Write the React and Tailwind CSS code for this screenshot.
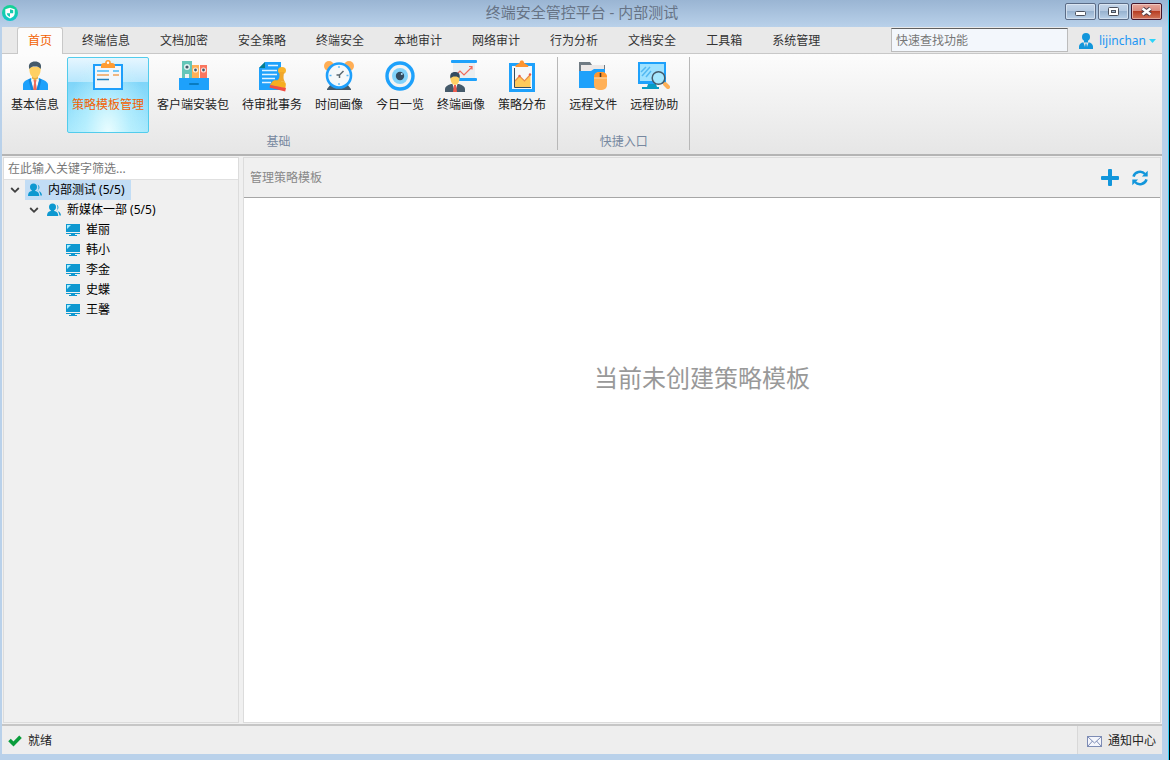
import React from "react";

const TABS = ["终端信息", "文档加密", "安全策略", "终端安全", "本地审计", "网络审计", "行为分析", "文档安全", "工具箱", "系统管理"];

const BASIC_ITEMS = [
  { label: "基本信息", Icon: PersonIcon },
  { label: "策略模板管理", Icon: TemplateIcon, active: true },
  { label: "客户端安装包", Icon: PackageIcon },
  { label: "待审批事务", Icon: ApprovalIcon },
  { label: "时间画像", Icon: ClockIcon },
  { label: "今日一览", Icon: EyeIcon },
  { label: "终端画像", Icon: PortraitIcon },
  { label: "策略分布", Icon: ChartIcon },
];

const QUICK_ITEMS = [
  { label: "远程文件", Icon: RemoteFileIcon },
  { label: "远程协助", Icon: RemoteAssistIcon },
];

const TERMINALS = ["崔丽", "韩小", "李金", "史蝶", "王馨"];

export default function App() {
  return (
    <div className="flex min-h-screen flex-col border-r border-black bg-[#b9d1ea] font-['Noto_Sans','Noto_Sans_CJK_SC',sans-serif] text-xs text-[#222]">
      <div className="flex flex-1 flex-col border-r border-[#35d0f5] pb-[6px]">
        <TitleBar />
        <div className="mr-[6px] ml-[2px] flex flex-1 flex-col bg-[#f0f0f0]">
          <TabBar />
          <Ribbon />
          <main className="flex flex-1 gap-1 p-px">
            <Sidebar />
            <Content />
          </main>
          <StatusBar />
        </div>
      </div>
    </div>
  );
}

function TitleBar() {
  return (
    <header className="flex h-[27px] items-start bg-linear-to-b from-[#9ab5d3] to-[#b9d1ea]">
      <div className="flex flex-1 pt-[5px] pl-[2px]">
        <LogoIcon />
      </div>
      <h1 className="h-6 text-[15px] leading-6 text-[#667385]">终端安全管控平台 - 内部测试</h1>
      <div className="flex flex-1 justify-end gap-[2px] pt-[3px] pr-[6px]">
        <WindowButton label="最小化">
          <rect x="10.5" y="8.5" width="10" height="4" rx="1" fill="#fff" stroke="#4a505c" />
        </WindowButton>
        <WindowButton label="最大化">
          <rect x="10.5" y="4.5" width="10" height="8" rx="1" fill="#fff" stroke="#4a505c" />
          <rect x="13.5" y="7.5" width="4" height="2" fill="#9fb6cf" stroke="#4a505c" />
        </WindowButton>
        <WindowButton label="关闭" close>
          <path d="M11.500 5.500l8 6M19.500 5.500l-8 6" stroke="#4a3a44" strokeWidth="4.500" />
          <path d="M11.500 5.500l8 6M19.500 5.500l-8 6" stroke="#fff" strokeWidth="2.500" />
        </WindowButton>
      </div>
    </header>
  );
}

function WindowButton({ label, close, children }) {
  const tone = close
    ? "border-[#43152a] from-[#e6a69b] via-[#d7867a] via-50% to-[#c96552]"
    : "border-[#5b6c86] from-[#c3d5e9] via-[#b3c8e0] via-50% to-[#b4cce6]";
  return (
    <button
      aria-label={label}
      className={`relative h-[17px] w-[31px] rounded-[2px] border bg-linear-to-b ${tone} shadow-[inset_0_0_0_1px_rgba(255,255,255,0.4)]`}
    >
      <span className={`absolute inset-x-px top-[7px] bottom-px ${close ? "bg-linear-to-b from-[#b5391f] to-[#cf6e53]" : "bg-linear-to-b from-[#96b1ce] to-[#b5cde6]"}`} />
      <svg className="absolute -top-px -left-px" width="31" height="17" viewBox="0 0 31 17">
        {children}
      </svg>
    </button>
  );
}

function TabBar() {
  return (
    <div className="flex h-[27px] justify-between border-b border-[#c8c8c8] bg-[#e9e9e9]">
      <nav className="flex h-[27px] pl-[15px]">
        <button className="mr-1 h-full w-[46px] rounded-t-[3px] border border-b-0 border-[#c8c8c8] bg-[#fcfcfc] text-[#f26100]">首页</button>
        {TABS.map((tab) => (
          <button key={tab} className="h-full px-[15px] text-[#333]">
            {tab}
          </button>
        ))}
      </nav>
      <div className="flex items-start pr-[6px]">
        <input
          aria-label="快速查找功能"
          placeholder="快速查找功能"
          className="mt-px h-6 w-[177px] border border-[#bcbcbc] border-t-[#606060] bg-[#f3f7fc] px-1 placeholder:text-[#777]"
        />
        <button className="flex h-[27px] items-center pl-[11px] text-[#2196f3]">
          <UserIcon />
          <span className="ml-[6px]">lijinchan</span>
          <svg className="ml-[3px]" width="7" height="4" viewBox="0 0 7 4">
            <path d="M0 0h7L3.5 4z" fill="#2bd4fa" />
          </svg>
        </button>
      </div>
    </div>
  );
}

function Ribbon() {
  return (
    <section className="flex h-[102px] border-b-2 border-[#b4b4b4] bg-linear-to-b from-[#fcfcfc] to-[#e6e6e6] pt-[3px] pb-1">
      <RibbonGroup title="基础" items={BASIC_ITEMS} className="pl-1" />
      <RibbonGroup title="快捷入口" items={QUICK_ITEMS} className="pl-[6px]" />
    </section>
  );
}

function RibbonGroup({ title, items, className }) {
  return (
    <div className={`flex flex-col justify-between border-r border-[#b8b8b8] pr-[6px] ${className}`}>
      <div className="flex gap-[3px]">
        {items.map(({ label, Icon, active }) => (
          <button
            key={label}
            className={`flex h-[76px] flex-col items-center rounded-[2px] border px-1 pt-[2px] leading-4 whitespace-nowrap ${
              active
                ? "border-[#52ccec] bg-[radial-gradient(ellipse_at_bottom,#f0ffffe6_0%,#c8f6ff88_40%,transparent_75%),linear-gradient(to_bottom,#e6f6ff_0%,#b8e7fd_32%,#7fd5f9_33%,#a6e8fd_100%)] text-[#f26100]"
                : "border-transparent"
            }`}
          >
            <svg width="32" height="32" viewBox="0 0 32 32" fill="none">
              <Icon />
            </svg>
            <span className="mt-[5px]">{label}</span>
          </button>
        ))}
      </div>
      <div className="text-center leading-[18px] text-[#7788a0]">{title}</div>
    </div>
  );
}

function Sidebar() {
  return (
    <aside className="w-[236px] shrink-0 border border-[#dcdcdc]">
      <input
        aria-label="关键字筛选"
        placeholder="在此输入关键字筛选..."
        className="block h-[22px] w-full border-b border-[#e0e0e0] bg-white px-1 placeholder:text-[#777]"
      />
      <ul className="text-black">
        <li>
          <div className="flex h-5 items-center pl-[5px]">
            <Chevron />
            <span className="ml-1 flex h-5 items-center bg-[#c2ddf5] pr-[6px] pl-[3px]">
              <GroupIcon />
              <span className="ml-[6px]">内部测试 (5/5)</span>
            </span>
          </div>
          <ul>
            <li>
              <div className="flex h-5 items-center pl-6">
                <Chevron />
                <span className="ml-1 flex items-center pl-[3px]">
                  <GroupIcon />
                  <span className="ml-[6px]">新媒体一部 (5/5)</span>
                </span>
              </div>
              <ul>
                {TERMINALS.map((name) => (
                  <li key={name} className="flex h-5 items-center pl-[62px]">
                    <MonitorIcon />
                    <span className="ml-[6px]">{name}</span>
                  </li>
                ))}
              </ul>
            </li>
          </ul>
        </li>
      </ul>
    </aside>
  );
}

function Content() {
  return (
    <section className="flex flex-1 flex-col border border-[#dcdcdc]">
      <div className="flex h-10 items-center justify-between border-b border-[#a6a6a6] pr-3 pl-[6px]">
        <h2 className="text-[#888]">管理策略模板</h2>
        <div className="flex items-center gap-[13px]">
          <button aria-label="新建">
            <svg width="18" height="18" viewBox="0 0 18 18">
              <rect x="7" y="0" width="4" height="17" rx="1" fill="#1296db" />
              <rect x="0" y="7" width="18" height="4" rx="1" fill="#1296db" />
            </svg>
          </button>
          <button aria-label="刷新">
            <svg width="16" height="16" viewBox="0 0 16 16" fill="none" stroke="#1296db" strokeWidth="2.5">
              <path d="M1.500 6.600A6.600 6 0 0 1 13 4M14.500 9.400A6.600 6 0 0 1 3 12" />
              <path d="M15.700 0.800v5.800h-5.800zM.3 15.200V9.400h5.800z" fill="#1296db" stroke="none" />
            </svg>
          </button>
        </div>
      </div>
      <div className="flex flex-1 justify-center bg-white pt-[162px]">
        <p className="text-2xl leading-9 text-[#999]">当前未创建策略模板</p>
      </div>
    </section>
  );
}

function StatusBar() {
  return (
    <footer className="flex h-[30px] items-stretch justify-between border-t-2 border-[#c6c6c6] bg-[#eeeeee]">
      <div className="flex items-center pt-[2px] pl-[6px]">
        <svg width="14" height="12" viewBox="0 0 14 12">
          <path d="M1.500 5l4 4L12.500 1.800" fill="none" stroke="#0a9d3c" strokeWidth="3.600" />
        </svg>
        <span className="ml-[6px]">就绪</span>
      </div>
      <button className="flex items-center border-l border-[#d8d8d8] bg-[#e9e9e9] pt-[2px] pr-[6px] pl-[9px]">
        <svg width="15" height="11" viewBox="0 0 15 11" fill="#f4f6fc" stroke="#7d8cb5">
          <rect x=".5" y=".5" width="14" height="10" />
          <path d="M1 1l6.500 6L14 1M1 10l4.500-5M14 10L9.500 5" fill="none" />
        </svg>
        <span className="ml-[6px]">通知中心</span>
      </button>
    </footer>
  );
}

function Chevron() {
  return (
    <svg width="12" height="8" viewBox="0 0 12 8">
      <path d="M2.200 2l3.800 3.800L9.800 2" fill="none" stroke="#404040" strokeWidth="1.800" />
    </svg>
  );
}

function GroupIcon() {
  return (
    <svg width="14" height="14" viewBox="0 0 14 14" fill="#0d98d0">
      <path d="M9.500 1.600a3 3 0 0 1 .8 5.200c-.5.4-.3 1 .3 1.200l-1-.2c.6-1 .9-1.800.9-3.500 0-1-.4-2-1-2.700z" />
      <path d="M10.800 8.200c2 .7 3 1.800 3.200 4.300h-1.600c-.2-2-.6-3-1.600-4.300z" />
      <circle cx="5.500" cy="4" r="3.500" />
      <path d="M0 13c0-3 1.200-4.300 3.700-4.900l.3-1.600h3l.3 1.600C9.800 8.700 11.300 10 11.300 13z" />
    </svg>
  );
}

function MonitorIcon() {
  return (
    <svg width="14" height="12" viewBox="0 0 14 12" fill="#0d98d0">
      <path d="M0 0h14v8H0zM0 9h14v1H9v1h2v1H3v-1h2v-1H0z" />
      <path d="M1 5V1h4z" fill="#a9ecff" />
    </svg>
  );
}

function UserIcon() {
  return (
    <svg width="14" height="16" viewBox="0 0 14 16" fill="#1296db">
      <ellipse cx="7" cy="4" rx="4" ry="4" />
      <path d="M5 7h4v2.500H5z" />
      <path d="M0 16v-2.500C0 11 2 9.800 4.400 9.200L6 14l.5-3.500h1L8 14l1.600-4.800C12 9.800 14 11 14 13.500V16z" />
    </svg>
  );
}

function LogoIcon() {
  return (
    <svg width="16" height="16" viewBox="0 0 16 16">
      <defs>
        <linearGradient id="logo" x1="0" y1="0" x2="0" y2="1">
          <stop stopColor="#17d391" />
          <stop offset="1" stopColor="#10c6cb" />
        </linearGradient>
      </defs>
      <circle cx="8" cy="8" r="8" fill="url(#logo)" />
      <path d="M8 2.800l4.700 1.500v3.900c0 2.500-2 4.200-4.700 5.200-2.700-1-4.700-2.700-4.700-5.200V4.300z" fill="#fff" />
      <path d="M8 4.300l3.200 1v2.900H8zM8 8.200v3.700c-1.800-.8-3-1.900-3.200-3.700z" fill="#14cbb0" />
    </svg>
  );
}

function PersonIcon() {
  return (
    <>
      <path d="M4 30v-5c0-3 2-4.500 8-7l4 3 4-3c6 2.500 9 4 9 7v5z" fill="#1ea1fb" />
      <path d="M12.500 18h7l.5 3-2.500 9h-3L12 21z" fill="#f1f3f5" />
      <path d="M14.500 20h3l-.6 3 1.100 7h-4l1.100-7z" fill="#f06a58" />
      <path d="M13 14h6v4.500l-3 2-3-2z" fill="#e8ad42" />
      <path d="M10.500 7h11c.8 5-1.500 11-5.500 11S9.700 12 10.500 7z" fill="#ffd063" />
      <path d="M10.300 9C8.800 3.500 12 1.500 16 1.500S23.200 3.500 21.700 9C20 7 19 6.500 16 6.500S12 7 10.300 9z" fill="#455a6a" />
      <path d="M11.500 18.500L14.500 30h-2.500l-2.500-10.500zM20.500 18.500L17.500 30H20l2.500-10.500z" fill="#1385db" />
    </>
  );
}

function TemplateIcon() {
  return (
    <>
      <rect x="2" y="5" width="28" height="24" fill="#f2f7fb" stroke="#1e9ffb" strokeWidth="2" />
      <path d="M9 8V5.500C9 4 10 3 12 3h8c2 0 3 1 3 2.500V8z" fill="#ff9c33" />
      <circle cx="16" cy="2.800" r="2.800" fill="#ff9c33" />
      <circle cx="16" cy="2.800" r="1.200" fill="#fff" />
      <path d="M5 11h12M21 11h6" stroke="#73c9f9" strokeWidth="2" />
      <path d="M5 15h12M21 15h6" stroke="#efb782" strokeWidth="2" />
      <path d="M5 19.500h12" stroke="#2180bb" strokeWidth="1.500" />
    </>
  );
}

function PackageIcon() {
  return (
    <>
      <path d="M5 1h10v18H5z" fill="#65c6b8" />
      <path d="M15 5h7v14h-7z" fill="#ffb057" />
      <path d="M23 5h7v14h-7z" fill="#fa765f" />
      <circle cx="10" cy="7" r="3" fill="#e5f3f2" />
      <circle cx="10" cy="7" r="1.600" fill="#455a6a" />
      <circle cx="18.500" cy="10" r="2.600" fill="#fff0df" />
      <circle cx="18.500" cy="10" r="1.400" fill="#455a6a" />
      <circle cx="26.500" cy="10" r="2.600" fill="#ffe1dd" />
      <circle cx="26.500" cy="10" r="1.400" fill="#455a6a" />
      <path d="M8 14h4v4H8z" fill="#f2f2f2" />
      <path d="M2 18h30v12H2z" fill="#1ea1fb" />
      <rect x="12" y="23" width="10" height="2" rx="1" fill="#087bc0" />
    </>
  );
}

function ApprovalIcon() {
  return (
    <>
      <path d="M3 8l6-6h16v28H3z" fill="#1ea1fb" />
      <path d="M3 8l6-6v6z" fill="#087d8e" />
      <path d="M12 5.500h10M6 10.500h15M6 14.500h15M6 18.500h13M6 22.500h9" stroke="#e2f3ff" strokeWidth="1.300" />
      <ellipse cx="26" cy="10.500" rx="4" ry="3.600" fill="#f9b42d" />
      <path d="M23.500 12h4.500l-.5 5c0 2 .5 3.500 1.500 5l-8-1c1.500-1.500 2.500-3 2.500-5z" fill="#f0a72c" />
      <path d="M16 22c1-1.500 2.500-2 4.500-1.700l7 1.500c2 .4 2.500 1.500 2.300 3.200l-.5 3.500L14 25z" fill="#f6ae20" />
      <path d="M14 25l16 3-.8 3.500-15.700-4z" fill="#f24e43" />
    </>
  );
}

function ClockIcon() {
  return (
    <>
      <circle cx="6" cy="6" r="5" fill="#ffae55" />
      <circle cx="26" cy="6" r="5" fill="#ffae55" />
      <path d="M8 24l-4 5v1h9zM24 24l4 5v1h-9z" fill="#455a6a" />
      <path d="M6 27h20v3H6z" fill="#455a6a" />
      <circle cx="16" cy="15.500" r="12" fill="#f5f8fa" stroke="#1e9ffb" strokeWidth="2.600" />
      <path d="M16 6v2M16 23v2M6.500 15.500h2M23.500 15.500h2" stroke="#56b5f5" strokeWidth="1.300" />
      <path d="M20.500 11L16 15.500M13.500 15h3v3" stroke="#5b6770" strokeWidth="1.500" />
    </>
  );
}

function EyeIcon() {
  return (
    <>
      <circle cx="16" cy="16" r="13" fill="#f4f4f4" stroke="#1ea1fb" strokeWidth="3.400" />
      <circle cx="16" cy="16" r="8" fill="#82d3fb" />
      <circle cx="16" cy="16" r="4.200" fill="#354c60" />
      <circle cx="17.800" cy="14" r="1" fill="#b7e6ff" />
    </>
  );
}

function PortraitIcon() {
  return (
    <>
      <path d="M8 3h22v15H8z" fill="#ebeef0" />
      <rect x="6" y="0" width="26" height="3" rx="1" fill="#1ea1fb" />
      <rect x="6" y="18" width="26" height="3" rx="1" fill="#1ea1fb" />
      <path d="M12 14l3-3 4 4 8-8M24 6.500h3v3" stroke="#f16a5b" strokeWidth="1.200" />
      <path d="M0 32v-3c0-2.500 2-3.500 6-5h8c4 1.500 6 2.500 6 5v3z" fill="#455a6a" />
      <path d="M7.500 24h5L10 32z" fill="#fff" />
      <path d="M9 25h2l1 7H8z" fill="#f05b4d" />
      <path d="M5.500 16h9c.5 5-1.500 9-4.500 9s-5-4-4.500-9z" fill="#ffd063" />
      <path d="M5.500 18.500c-1-4.500 1-6.500 4.500-6.500s5.500 2 4.500 6.500c-1.500-1.500-2-2-4.500-2s-3 .5-4.500 2z" fill="#354c60" />
    </>
  );
}

function ChartIcon() {
  return (
    <>
      <rect x="4.500" y="4.500" width="23" height="26" fill="#f7f8f9" stroke="#1ea1fb" strokeWidth="3" />
      <path d="M9.500 7V5.500l4-2.500c.5-2 1-2.500 2.300-2.500S17.700 1 18.200 3l4 2.500V7z" fill="#ff9530" />
      <path d="M9 21l4.500-5 5 5 6-6v12H9z" fill="#ffca5a" />
      <path d="M9 21l4.500-5 5 5 5.500-6" stroke="#e88c45" strokeWidth="1.200" />
      <circle cx="13.500" cy="16" r="1.200" fill="#e9574b" />
      <circle cx="24" cy="14.500" r="1.200" fill="#e9574b" />
      <path d="M8.500 8v19.500H25" stroke="#354c60" />
    </>
  );
}

function RemoteFileIcon() {
  return (
    <>
      <path d="M2 2h11l2 3h13v20H2z" fill="#707b83" />
      <path d="M4 5h23v12H4z" fill="#ece8e7" />
      <path d="M2 11h12l3-2h11v19H2z" fill="#1ea1fb" />
      <rect x="17" y="12" width="13" height="18" rx="5" fill="#ffb057" />
      <path d="M17 17.500c0-4 2.500-5.500 6.500-5.500s6.500 1.500 6.500 5.500z" fill="#ff962d" />
      <path d="M17 18h13" stroke="#fbd9b0" />
      <path d="M23.500 13v4" stroke="#46372b" strokeWidth="1.600" />
    </>
  );
}

function RemoteAssistIcon() {
  return (
    <>
      <path d="M0 2h28v22H0z" fill="#1ea1fb" />
      <path d="M2 4h24v17H2z" fill="#9ee2ff" />
      <path d="M4 16l8-9M8 17l5-6M3 12l5-5" stroke="#53b9f2" strokeWidth="1.500" />
      <path d="M10 24h8l1 3h2v2H4v-2h5z" fill="#079cc4" />
      <path d="M27 24l3 3" stroke="#ffb057" strokeWidth="4" strokeLinecap="round" />
      <circle cx="20.500" cy="18" r="6.300" fill="#a6e8ff" stroke="#455a6a" strokeWidth="1.500" />
    </>
  );
}
